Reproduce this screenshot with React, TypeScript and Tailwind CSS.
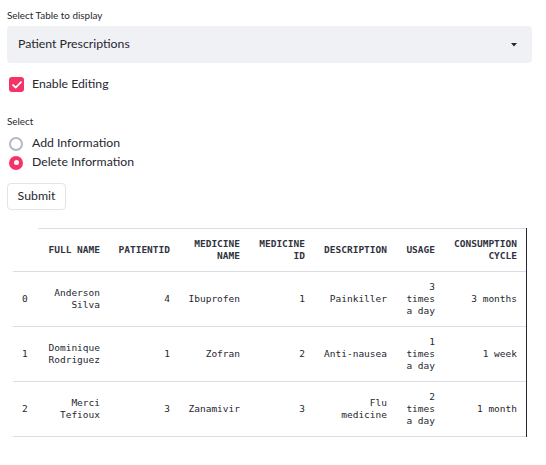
import { useState } from "react";

const rows = [
  { idx: 0, name: "Anderson Silva", pid: 4, med: "Ibuprofen", mid: 1, desc: "Painkiller", usage: "3 times a day", cycle: "3 months" },
  { idx: 1, name: "Dominique Rodriguez", pid: 1, med: "Zofran", mid: 2, desc: "Anti-nausea", usage: "1 times a day", cycle: "1 week" },
  { idx: 2, name: "Merci Tefioux", pid: 3, med: "Zanamivir", mid: 3, desc: "Flu medicine", usage: "2 times a day", cycle: "1 month" },
];

const headers = ["FULL NAME", "PATIENTID", "MEDICINE NAME", "MEDICINE ID", "DESCRIPTION", "USAGE", "CONSUMPTION CYCLE"];

export default function App() {
  const [editing, setEditing] = useState(true);
  const [mode, setMode] = useState("delete");

  return (
    <div className="min-h-[465px] bg-white pl-[7px] pr-[14px] pt-[9px] text-[#262730] font-['Lato','Noto_Sans',sans-serif]">
      {/* Table picker */}
      <div className="text-[9.9px] leading-[13px]">Select Table to display</div>
      <div className="mt-[4px] flex h-[37px] items-center justify-between rounded-[4px] bg-[#eff1f5] pl-[11px] pr-[15px] text-[12.3px]">
        <span>Patient Prescriptions</span>
        <svg width="6" height="4" viewBox="0 0 6 4">
          <path d="M0 0h6L3 3.5z" fill="#262730" />
        </svg>
      </div>

      {/* Checkbox */}
      <label className="mt-[14px] flex h-[15px] cursor-pointer items-center gap-[8px] pl-[2px] text-[12.25px]">
        <span
          onClick={() => setEditing(!editing)}
          className={`flex h-[15px] w-[15px] items-center justify-center rounded-[3px] ${
            editing ? "bg-[#f63366]" : "border border-[#a3a8b8] bg-white"
          }`}
        >
          {editing && (
            <svg width="10" height="8" viewBox="0 0 10 8">
              <path d="M1 4l2.7 2.6L9 1.2" fill="none" stroke="white" strokeWidth={1.8} strokeLinecap="round" strokeLinejoin="round" />
            </svg>
          )}
        </span>
        <span>Enable Editing</span>
      </label>

      {/* Radio group */}
      <div className="mt-[23px] text-[9.9px] leading-[13px]">Select</div>
      <div className="mt-[6px] flex flex-col">
        {[
          { key: "add", label: "Add Information" },
          { key: "delete", label: "Delete Information" },
        ].map((o) => (
          <div
            key={o.key}
            onClick={() => setMode(o.key)}
            className="flex h-[19px] cursor-pointer items-center gap-[9px] pl-[2px] text-[12.25px]"
          >
            {mode === o.key ? (
              <span className="flex h-[14px] w-[14px] items-center justify-center rounded-full bg-[#f63366]">
                <span className="h-[5px] w-[5px] rounded-full bg-white" />
              </span>
            ) : (
              <span className="h-[14px] w-[14px] rounded-full border-2 border-[#b4b8c5] bg-white" />
            )}
            <span>{o.label}</span>
          </div>
        ))}
      </div>

      <button className="mt-[11px] h-[27px] w-[59px] rounded-[4px] border border-[#e3e4e8] bg-white text-[12.3px] text-[#262730]">
        Submit
      </button>

      {/* Data table */}
      <div className="ml-[6px] mt-[18px] w-[514px] border-r border-[#262730] font-['DejaVu_Sans_Mono',monospace] text-[9.5px] leading-[12px]">
        <table className="w-[513px] table-fixed border-collapse">
          <colgroup>
            <col className="w-[25px]" />
            <col className="w-[71px]" />
            <col className="w-[70px]" />
            <col className="w-[70px]" />
            <col className="w-[65px]" />
            <col className="w-[82px]" />
            <col className="w-[48px]" />
            <col className="w-[82px]" />
          </colgroup>
          <thead>
            <tr className="h-[43px]">
              <th className="border-b border-[#dcdce4]" />
              {headers.map((h) => (
                <th
                  key={h}
                  className="border-b border-t border-[#dcdce4] px-[9px] text-right align-middle font-bold text-[#31333f]"
                >
                  {h}
                </th>
              ))}
            </tr>
          </thead>
          <tbody>
            {rows.map((r) => (
              <tr key={r.idx} className="h-[55px]">
                <th className="border-b border-[#dcdce4] px-[9px] text-left align-middle font-normal">{r.idx}</th>
                {[r.name, r.pid, r.med, r.mid, r.desc, r.usage, r.cycle].map((v, i) => (
                  <td key={i} className="border-b border-[#dcdce4] px-[9px] text-right align-middle">
                    {v}
                  </td>
                ))}
              </tr>
            ))}
          </tbody>
        </table>
      </div>
    </div>
  );
}
